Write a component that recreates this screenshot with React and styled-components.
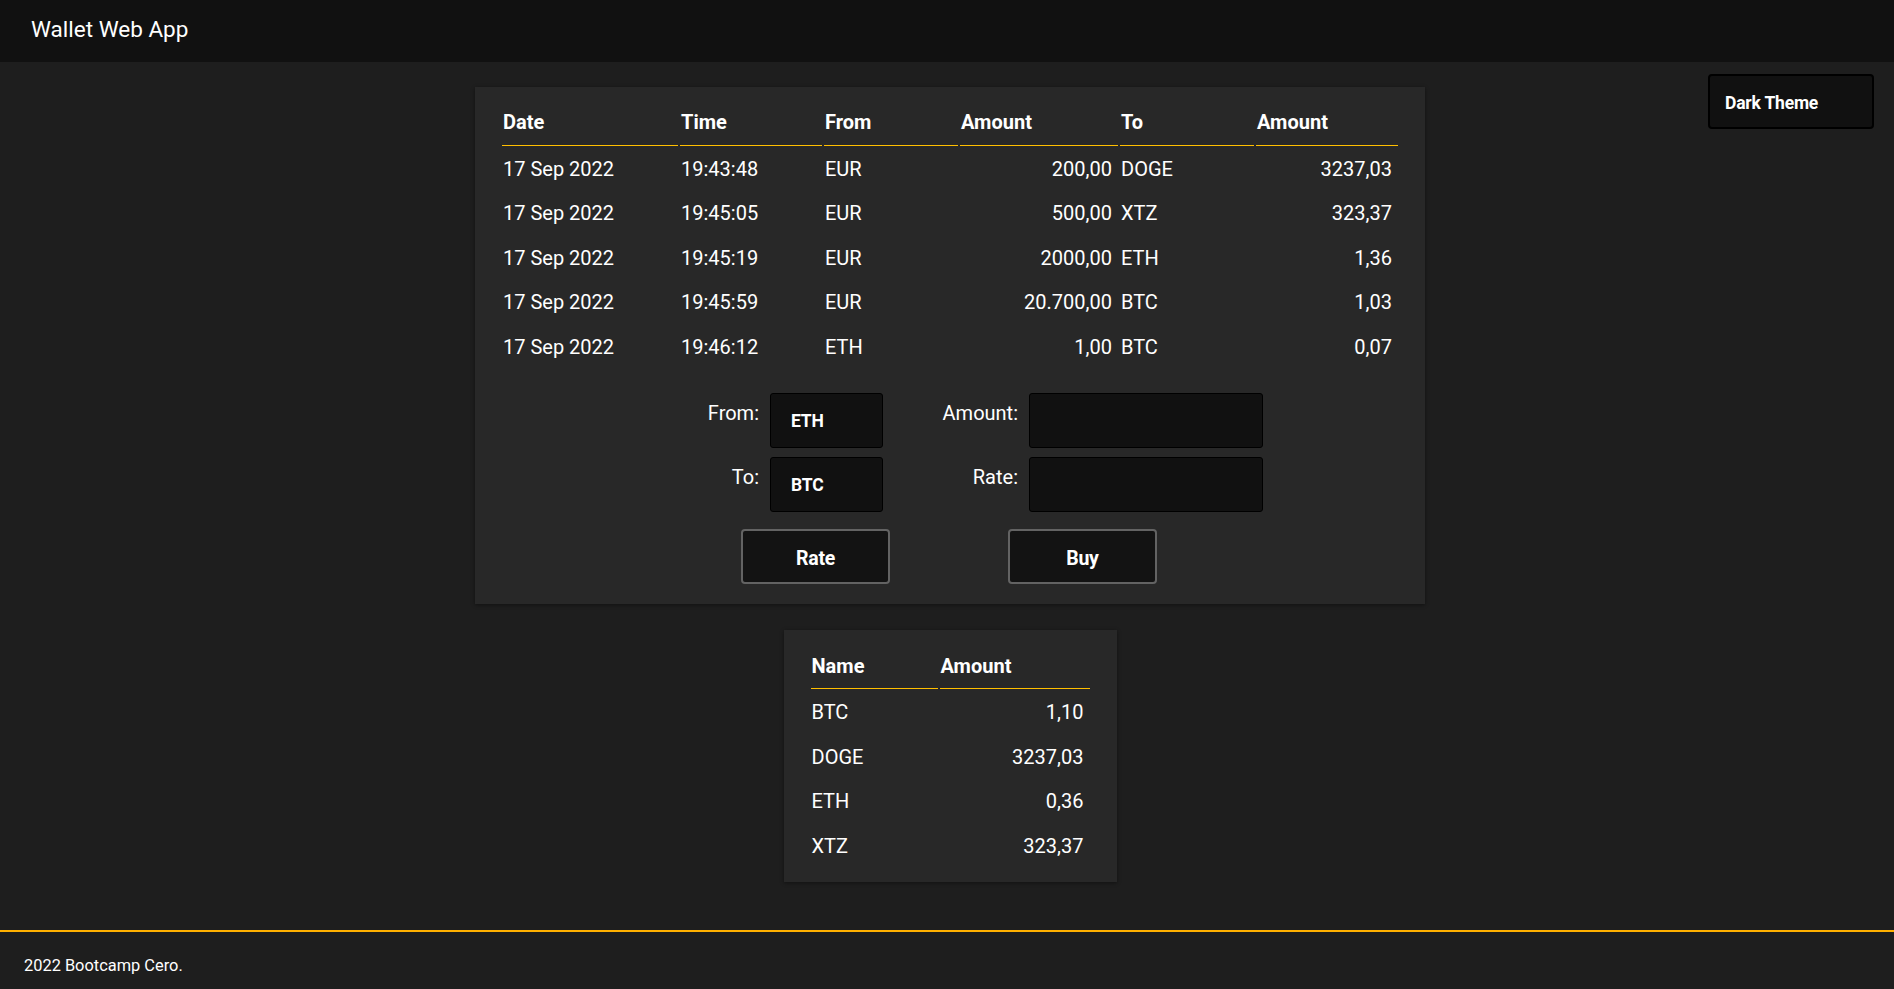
import React from "react";
import styled, { createGlobalStyle } from "styled-components";

const GlobalStyle = createGlobalStyle`
  html, body {
    margin: 0;
    padding: 0;
    background: #1e1e1e;
    overflow: hidden;
  }
  body {
    font-family: Roboto, "Noto Sans", sans-serif;
    color: #ffffff;
  }
  * { box-sizing: border-box; }
`;

const Page = styled.div`
  display: flex;
  flex-direction: column;
  height: 100vh;
`;

const Header = styled.header`
  height: 62px;
  flex: none;
  background: #111111;
  padding: 16px 31px 0;
`;

const Brand = styled.div`
  font-size: 22.5px;
  line-height: 27px;
  color: #ffffff;
`;

const Main = styled.main`
  flex: 1;
  display: grid;
  grid-template-columns: 1fr auto 1fr;
  align-items: start;
  padding: 12px 0 0 6px;
`;

const Column = styled.div`
  grid-column: 2;
  display: flex;
  flex-direction: column;
  align-items: center;
  gap: 26px;
  padding-top: 13px;
`;

const Card = styled.section`
  background: #282828;
  padding: ${(p) => p.$pad};
  box-shadow: 0 1px 4px rgba(0, 0, 0, 0.45);
`;

const Table = styled.table`
  border-collapse: separate;
  border-spacing: 2px;
  font-size: 20px;
  table-layout: fixed;
`;

const Th = styled.th`
  width: ${(p) => p.$w}px;
  text-align: left;
  font-weight: 700;
  line-height: 22.5px;
  padding: 10px 6px 11px 1px;
  border-bottom: 1px solid #ffbf00;
`;

const Td = styled.td`
  text-align: ${(p) => (p.$num ? "right" : "left")};
  line-height: 22.5px;
  padding: 10px 6px 10px 1px;
  white-space: nowrap;
`;

const FormGrid = styled.div`
  display: grid;
  grid-template-columns: 60px 113px 124px 234px;
  column-gap: 11px;
  row-gap: 9px;
  margin: 22.5px 0 0 199px;
`;

const Label = styled.label`
  text-align: right;
  font-size: 20px;
  line-height: 22px;
  padding-top: 9.5px;
  white-space: nowrap;
`;

const Field = styled.input`
  height: 55px;
  width: 100%;
  background: #111111;
  border: 1px solid #000000;
  border-radius: 3px;
  color: #ffffff;
  font-family: Roboto, sans-serif;
  font-weight: 700;
  font-size: 17.5px;
  letter-spacing: -0.2px;
  padding: 2px 0 0 20px;
  outline: none;
`;

const ButtonRow = styled.div`
  display: flex;
  gap: 118px;
  margin: 17px 0 0 241px;
`;

const ActionButton = styled.button`
  width: 149px;
  height: 55px;
  background: #131313;
  border: 2px solid #636363;
  border-radius: 4px;
  color: #ffffff;
  font-family: Roboto, sans-serif;
  font-weight: 700;
  font-size: 19.5px;
  letter-spacing: -0.3px;
  padding: 4px 0 0;
  cursor: pointer;
`;

const ThemeButton = styled.button`
  grid-column: 3;
  justify-self: end;
  margin-right: 20px;
  width: 166px;
  height: 55px;
  background: #111111;
  border: 2px solid #000000;
  border-radius: 4px;
  color: #ffffff;
  font-family: Roboto, sans-serif;
  font-weight: 700;
  font-size: 17.5px;
  letter-spacing: -0.2px;
  text-align: left;
  padding: 2px 0 0 15px;
  cursor: pointer;
`;

const Footer = styled.footer`
  flex: none;
  height: 59px;
  border-top: 2px solid #ffb000;
  padding: 24px 24px 0;
  font-size: 16.4px;
  line-height: 19px;
  background: #1e1e1e;
`;

const transactions = [
  ["17 Sep 2022", "19:43:48", "EUR", "200,00", "DOGE", "3237,03"],
  ["17 Sep 2022", "19:45:05", "EUR", "500,00", "XTZ", "323,37"],
  ["17 Sep 2022", "19:45:19", "EUR", "2000,00", "ETH", "1,36"],
  ["17 Sep 2022", "19:45:59", "EUR", "20.700,00", "BTC", "1,03"],
  ["17 Sep 2022", "19:46:12", "ETH", "1,00", "BTC", "0,07"],
];

const txHeads = [
  ["Date", 176],
  ["Time", 142],
  ["From", 134],
  ["Amount", 158],
  ["To", 134],
  ["Amount", 142],
];

const balances = [
  ["BTC", "1,10"],
  ["DOGE", "3237,03"],
  ["ETH", "0,36"],
  ["XTZ", "323,37"],
];

export default function App() {
  return (
    <>
      <GlobalStyle />
      <Page>
        <Header>
          <Brand>Wallet Web App</Brand>
        </Header>
        <Main>
          <Column>
            <Card $pad="12px 25px 20px">
              <Table>
                <thead>
                  <tr>
                    {txHeads.map(([h, w], i) => (
                      <Th key={i} $w={w}>
                        {h}
                      </Th>
                    ))}
                  </tr>
                </thead>
                <tbody>
                  {transactions.map((r, i) => (
                    <tr key={i}>
                      <Td>{r[0]}</Td>
                      <Td>{r[1]}</Td>
                      <Td>{r[2]}</Td>
                      <Td $num>{r[3]}</Td>
                      <Td>{r[4]}</Td>
                      <Td $num>{r[5]}</Td>
                    </tr>
                  ))}
                </tbody>
              </Table>
              <FormGrid>
                <Label>From:</Label>
                <Field readOnly value="ETH" />
                <Label>Amount:</Label>
                <Field readOnly value="" />
                <Label>To:</Label>
                <Field readOnly value="BTC" />
                <Label>Rate:</Label>
                <Field readOnly value="" />
              </FormGrid>
              <ButtonRow>
                <ActionButton>Rate</ActionButton>
                <ActionButton>Buy</ActionButton>
              </ButtonRow>
            </Card>
            <Card $pad="13px 25px 13px">
              <Table>
                <thead>
                  <tr>
                    <Th $w={127}>Name</Th>
                    <Th $w={150}>Amount</Th>
                  </tr>
                </thead>
                <tbody>
                  {balances.map(([n, a]) => (
                    <tr key={n}>
                      <Td>{n}</Td>
                      <Td $num>{a}</Td>
                    </tr>
                  ))}
                </tbody>
              </Table>
            </Card>
          </Column>
          <ThemeButton>Dark Theme</ThemeButton>
        </Main>
        <Footer>2022 Bootcamp Cero.</Footer>
      </Page>
    </>
  );
}
